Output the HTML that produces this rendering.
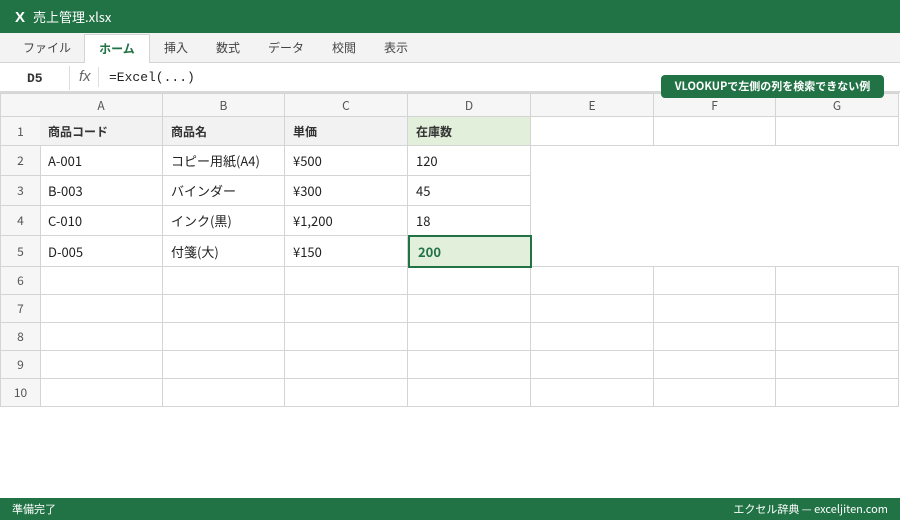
<!DOCTYPE html>
<html><head><meta charset="utf-8"><style>
*{margin:0;padding:0;box-sizing:border-box}
body{width:900px;height:520px;overflow:hidden;background:#fff;font-family:"Noto Sans CJK JP","Liberation Sans",sans-serif;position:relative;color:#222}
.title{position:absolute;left:0;top:0;width:900px;height:33px;background:#217346;color:#fff;font-size:13px}
.title b{position:absolute;left:15px;top:9px;font-size:15px;font-family:"Liberation Sans",sans-serif}
.title span{position:absolute;left:33px;top:7px}
.rib{position:absolute;top:33px;left:0;width:900px;height:30px;background:#f3f3f3;border-bottom:1px solid #d4d4d4}
.tab{position:absolute;top:6px;font-size:12px;color:#444}
.tab.on{top:1px;height:30px;background:#fff;border:1px solid #d4d4d4;border-bottom:none;color:#217346;font-weight:bold;padding-top:5px;text-align:center}
.fb{position:absolute;top:63px;left:0;width:900px;height:30px;border-bottom:2px solid #d8d8d8;background:#fff}
.g{position:absolute;border-right:1px solid #d4d4d4;border-bottom:1px solid #d4d4d4;font-size:13px;padding-left:8px;display:flex;align-items:center}
.h{background:#f6f6f6;color:#555;justify-content:center;padding:0;font-size:12px}
.st{position:absolute;left:0;top:498px;width:900px;height:22px;background:#217346;color:#fff;font-size:11px}
</style></head><body>
<div class="title"><b>X</b><span>売上管理.xlsx</span></div>
<div class="rib">
<div class="tab" style="left:23px">ファイル</div>
<div class="tab on" style="left:84px;width:66px">ホーム</div>
<div class="tab" style="left:164px">挿入</div>
<div class="tab" style="left:216px">数式</div>
<div class="tab" style="left:268px">データ</div>
<div class="tab" style="left:332px">校閲</div>
<div class="tab" style="left:384px">表示</div>
</div>
<div class="fb">
<div style="position:absolute;left:27px;top:8px;font:bold 13px 'Liberation Mono',monospace;color:#333">D5</div>
<div style="position:absolute;left:69px;top:3px;width:1px;height:24px;background:#ddd"></div>
<div style="position:absolute;left:79px;top:5px;font:italic 15px 'Liberation Sans',sans-serif;color:#666">fx</div>
<div style="position:absolute;left:98px;top:4px;width:1px;height:20px;background:#ddd"></div>
<div style="position:absolute;left:109px;top:7px;font:13px 'Liberation Mono',monospace;color:#222">=Excel(...)</div>
</div>
<div id="grid"></div>
<div style="position:absolute;left:661px;top:75px;width:223px;height:23px;background:#217346;border-radius:4px;color:#fff;font-size:11px;font-weight:bold;text-align:center;line-height:23px;z-index:5">VLOOKUPで左側の列を検索できない例</div>
<div class="st"><span style="position:absolute;left:12px;top:3px">準備完了</span><span style="position:absolute;right:12px;top:3px">エクセル辞典 — exceljiten.com</span></div>
<script>
(function(){
var xs=[0,40,163,285,408,531,654,776,899],ys=[93,117,146,176,206,236,267,295,323,351,379,407];
var data={1:["商品コード","商品名","単価","在庫数"],2:["A-001","コピー用紙(A4)","¥500","120"],3:["B-003","バインダー","¥300","45"],4:["C-010","インク(黒)","¥1,200","18"],5:["D-005","付箋(大)","¥150","200"]};
var h="";
for(var r=0;r<11;r++)for(var c=0;c<8;c++){
 if(r>=2&&r<=5&&c>=5)continue;
 var tp=ys[r],hh=ys[r+1]-ys[r];
 if(r==6&&c>=5){tp-=1;hh+=1;}
 var st="left:"+xs[c]+"px;top:"+tp+"px;width:"+(xs[c+1]-xs[c]+(c==0?1:0))+"px;height:"+hh+"px;";
 if(r==6&&c>=5)st+="border-top:1px solid #d4d4d4;";
 var cls="g",t="";
 if(r==0){cls+=" h";t=c?"ABCDEFG"[c-1]:"";if(c==0)st+="border-left:1px solid #d4d4d4;";st+="border-top:1px solid #d4d4d4;";}
 else if(c==0){cls+=" h";t=r;st+="border-left:1px solid #d4d4d4;";}
 else{ if(data[r]&&c<=4)t=data[r][c-1];
  if(r==1&&c<=3){st+="background:#f2f2f2;font-weight:bold;font-size:12px;";}
  if(r==1&&c==4){st+="background:#e2efda;font-weight:bold;font-size:12px;";}
  if(r==5&&c==4){st+="background:#e2efda;border:2px solid #217346;color:#217346;font-weight:bold;font-size:13px;left:408px;top:235px;width:124px;height:33px;z-index:2;";}
  if(r==1&&c<=4)st+="color:#333;";}
 h+='<div class="'+cls+'" style="'+st+'">'+t+'</div>';
}
document.getElementById("grid").innerHTML=h;
})();
</script>
</body></html>
